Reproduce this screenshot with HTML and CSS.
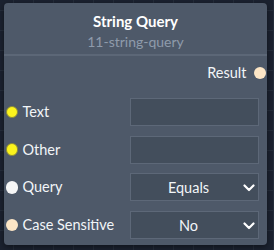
FILE: index.html
```html
<!DOCTYPE html>
<html>
<head>
<meta charset="utf-8">
<link rel="stylesheet" href="styles.css">
</head>
<body>
<div class="canvas">
  <div class="node">
    <div class="header">
      <div class="title">String Query</div>
      <div class="subtitle">11-string-query</div>
    </div>
    <div class="body">
      <div class="output-row">
        <span class="label">Result</span>
        <span class="dot peach"></span>
      </div>
      <div class="inputs">
        <div class="row">
          <span class="dot yellow"></span>
          <span class="label">Text</span>
          <div class="field"></div>
        </div>
        <div class="row">
          <span class="dot yellow"></span>
          <span class="label">Other</span>
          <div class="field"></div>
        </div>
        <div class="row">
          <span class="dot white"></span>
          <span class="label">Query</span>
          <div class="field select"><span class="value">Equals</span><svg class="chev" width="12" height="8" viewBox="0 0 12 8"><path d="M1.5 1.5 L6 6 L10.5 1.5" fill="none" stroke="#ffffff" stroke-width="2.2" stroke-linecap="round" stroke-linejoin="round"/></svg></div>
        </div>
        <div class="row">
          <span class="dot peach"></span>
          <span class="label">Case Sensitive</span>
          <div class="field select"><span class="value">No</span><svg class="chev" width="12" height="8" viewBox="0 0 12 8"><path d="M1.5 1.5 L6 6 L10.5 1.5" fill="none" stroke="#ffffff" stroke-width="2.2" stroke-linecap="round" stroke-linejoin="round"/></svg></div>
        </div>
      </div>
    </div>
  </div>
</div>
</body>
</html>
```
FILE: styles.css
```css
html, body {
  margin: 0;
  padding: 0;
}
body {
  width: 274px;
  height: 250px;
  overflow: hidden;
  background-color: #1b2230;
  background-image:
    linear-gradient(to right, #252d3b 1px, transparent 1px),
    linear-gradient(to bottom, #252d3b 1px, transparent 1px);
  background-size: 20px 20px;
  background-position: 13px 10px;
  font-family: "Lato", "Liberation Sans", sans-serif;
  color: #f2f5f8;
}
.canvas {
  padding: 3px 0 0 4px;
}
.node {
  width: 263px;
  height: 242px;
  background: #4e5969;
  border-radius: 4px;
  box-shadow: 0 2px 6px rgba(0, 0, 0, 0.45);
  display: flex;
  flex-direction: column;
}
.header {
  height: 53px;
  border-bottom: 2px solid #5c6777;
  display: flex;
  flex-direction: column;
  align-items: center;
  padding-top: 8px;
  box-sizing: border-box;
}
.title {
  font-weight: 700;
  font-size: 15px;
  line-height: 20px;
  color: #ffffff;
}
.subtitle {
  font-size: 14px;
  line-height: 19px;
  margin-top: 1px;
  color: #8f9bab;
}
.body {
  display: flex;
  flex-direction: column;
}
.output-row {
  display: flex;
  justify-content: flex-end;
  align-items: center;
  height: 20px;
  margin-top: 7px;
  padding-right: 1px;
  gap: 7px;
}
.label {
  font-size: 14.5px;
  line-height: 18px;
}
.inputs {
  display: flex;
  flex-direction: column;
  gap: 9.7px;
  margin-top: 15px;
}
.row {
  display: flex;
  align-items: center;
  height: 28px;
  padding-left: 1.5px;
}
.row .label {
  margin-left: 4.5px;
  flex: 1;
}
.dot {
  width: 12.5px;
  height: 12.5px;
  border-radius: 50%;
  flex: none;
  box-sizing: border-box;
}
.yellow {
  background: #fbf31c;
  border: 1px solid #8a8a3a;
}
.white {
  background: #f6f6f6;
}
.peach {
  background: #fde6c6;
}
.field {
  width: 129px;
  height: 28px;
  box-sizing: border-box;
  background: #434e5c;
  border: 1.5px solid #5d6878;
  margin-right: 8px;
  flex: none;
}
.select {
  display: flex;
  align-items: center;
  position: relative;
}
.value {
  flex: 1;
  text-align: center;
  font-size: 14.5px;
  padding-right: 12px;
  padding-left: 0;
}
.chev {
  position: absolute;
  right: 3.5px;
  top: 10px;
}
```
